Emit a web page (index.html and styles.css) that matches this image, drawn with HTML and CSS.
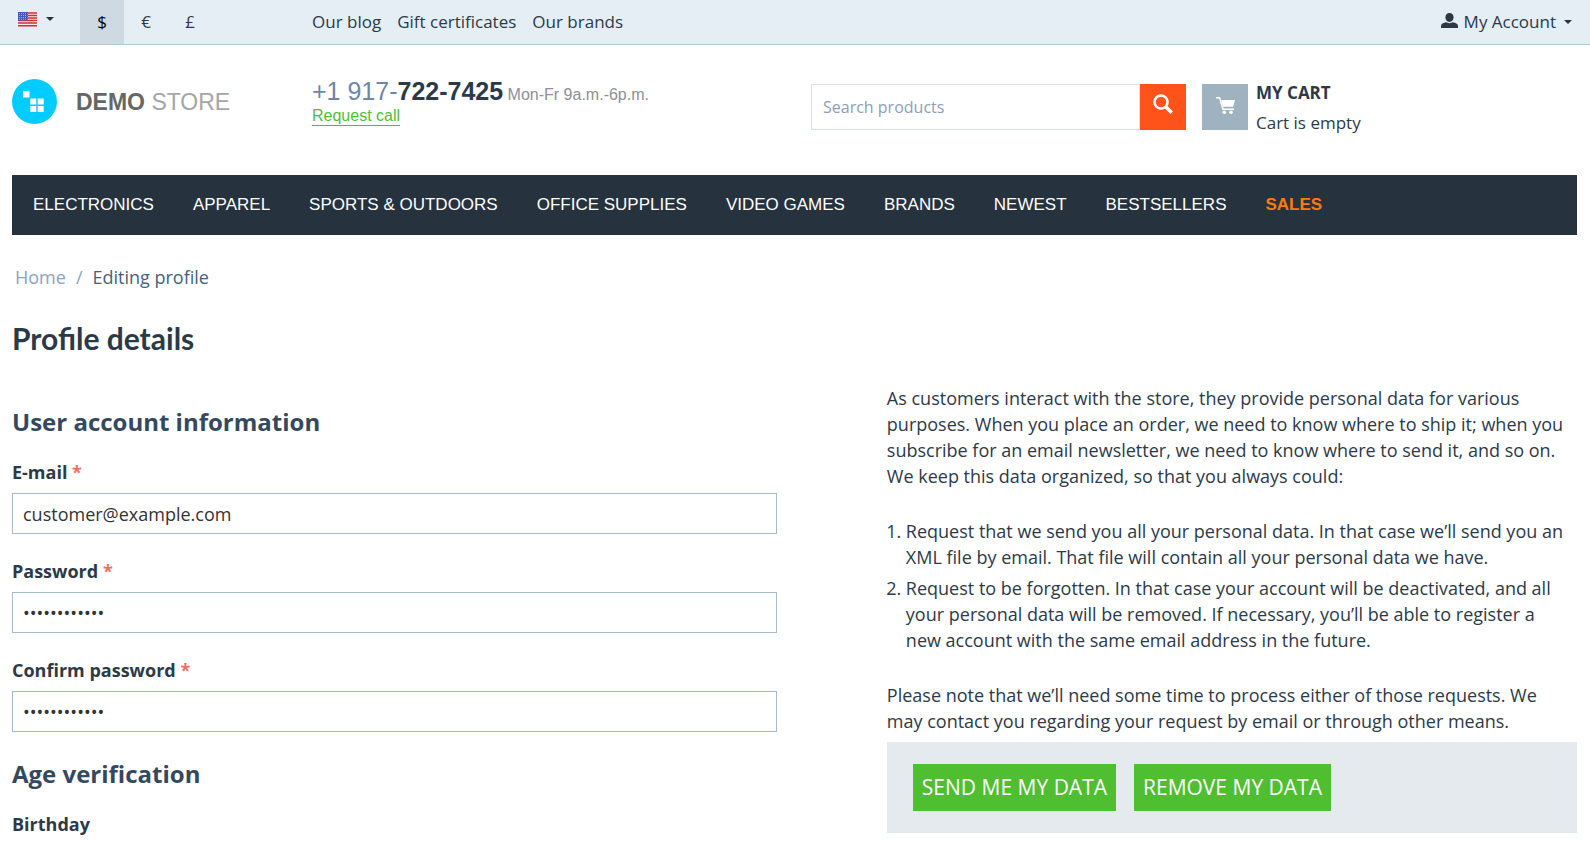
FILE: index.html
```html
<!DOCTYPE html>
<html lang="en">
<head>
<meta charset="utf-8">
<meta name="viewport" content="width=device-width, initial-scale=1">
<title>Profile details</title>
<link rel="stylesheet" href="styles.css">
</head>
<body>
<div class="topbar">
  <div class="topbar-left">
    <button class="language" type="button" aria-label="Language: English">
      <svg class="flag" viewBox="0 0 19 15" width="19" height="15" aria-hidden="true">
        <rect width="19" height="15" rx="1" fill="#f4eeee"/>
        <path d="M0 1h19M0 3.5h19M0 6h19M0 8.5h19M0 11h19M0 13.7h19" stroke="#cf2c38" stroke-width="1.4"/>
        <rect width="10" height="8.5" fill="#4659ae"/>
        <path d="M1 1.5h8.500M1 3.500h8.500M1 5.500h8.500M1 7.300h8.500" stroke="#b6c0e4" stroke-width=".8" stroke-dasharray="1 1"/>
      </svg>
      <span class="caret"></span>
    </button>
    <div class="currencies">
      <a class="currency currency-active" href="#usd">$</a>
      <a class="currency" href="#eur">€</a>
      <a class="currency" href="#gbp">£</a>
    </div>
  </div>
  <nav class="quick-links" aria-label="Quick links">
    <a href="#blog">Our blog</a>
    <a href="#gift">Gift certificates</a>
    <a href="#brands">Our brands</a>
  </nav>
  <button class="account" type="button">
    <svg viewBox="0 0 17 15" width="17" height="15" aria-hidden="true"><path fill="#2c3944" d="M8.500 0C11 0 12.600 1.900 12.600 4.300S11 9 8.500 9 4.400 6.700 4.400 4.300 6 0 8.500 0zM0 15v-2c0-2 2.500-3.200 5-3.700C7 10.400 10 10.400 12 9.300c2.500.5 5 1.700 5 3.700v2z"/></svg>
    <span>My Account</span>
    <span class="caret"></span>
  </button>
</div>
<header class="header">
  <a class="logo" href="#home">
    <svg viewBox="0 0 45 45" width="45" height="45" aria-hidden="true">
      <circle cx="22.500" cy="22.500" r="22.500" fill="#0cf"/>
      <path fill="#fff" d="M11 12h6.500v6.500H11zM18.300 19.500h6v6h-6zM25.700 19.500h6v6h-6zM18.300 27h6v6h-6zM25.700 27h6v6h-6z"/>
    </svg>
    <span class="logo-text"><b>DEMO</b> STORE</span>
  </a>
  <div class="phone">
    <div class="phone-line"><span class="phone-number">+1 917-<b>722-7425</b></span> <span class="hours">Mon-Fr 9a.m.-6p.m.</span></div>
    <a class="request-call" href="#call">Request call</a>
  </div>
  <form class="search" role="search">
    <input class="search-input" type="text" placeholder="Search products" aria-label="Search products">
    <button class="search-button" type="button" aria-label="Search">
      <svg viewBox="0 0 20 20" width="20" height="20" fill="none" stroke="#fff" aria-hidden="true"><circle cx="8" cy="8" r="6.500" stroke-width="2.600"/><path d="M13 13l5.800 5.800" stroke-width="3.600"/></svg>
    </button>
  </form>
  <a class="cart" href="#cart">
    <span class="cart-icon">
      <svg viewBox="0 0 19 17" width="19" height="17" aria-hidden="true"><path fill="none" stroke="#fff" stroke-width="1.500" d="M0 .8h3.600L7 12.200h11"/><path fill="#fff" d="M5 3h14l-2 6.800H7z"/><circle cx="8.300" cy="15.200" r="1.800" fill="#fff"/><circle cx="15" cy="15.200" r="1.800" fill="#fff"/></svg>
    </span>
    <span class="cart-text"><b>MY CART</b><span>Cart is empty</span></span>
  </a>
</header>
<nav class="menu" aria-label="Categories">
  <a href="#electronics">ELECTRONICS</a>
  <a href="#apparel">APPAREL</a>
  <a href="#sports">SPORTS &amp; OUTDOORS</a>
  <a href="#office">OFFICE SUPPLIES</a>
  <a href="#games">VIDEO GAMES</a>
  <a href="#brand-list">BRANDS</a>
  <a href="#newest">NEWEST</a>
  <a href="#bestsellers">BESTSELLERS</a>
  <a class="menu-sales" href="#sales">SALES</a>
</nav>
<main class="main">
  <nav class="breadcrumbs" aria-label="Breadcrumbs">
    <a href="#home">Home</a><span class="slash">/</span><span>Editing profile</span>
  </nav>
  <h1 class="title">Profile details</h1>
  <div class="columns">
    <form class="profile">
      <h2 class="subheader">User account information</h2>
      <div class="field">
        <label for="email">E-mail <span class="required">*</span></label>
        <input id="email" type="text" value="customer@example.com">
      </div>
      <div class="field">
        <label for="password">Password <span class="required">*</span></label>
        <input id="password" type="password" value="storedemo123">
      </div>
      <div class="field">
        <label for="confirm">Confirm password <span class="required">*</span></label>
        <input id="confirm" type="password" value="storedemo123">
      </div>
      <h2 class="subheader">Age verification</h2>
      <div class="field">
        <span class="field-name">Birthday</span>
      </div>
    </form>
    <aside class="privacy">
      <p>As customers interact with the store, they provide personal data for various purposes. When you place an order, we need to know where to ship it; when you subscribe for an email newsletter, we need to know where to send it, and so on. We keep this data organized, so that you always could:</p>
      <ol>
        <li>Request that we send you all your personal data. In that case we’ll send you an XML file by email. That file will contain all your personal data we have.</li>
        <li>Request to be forgotten. In that case your account will be deactivated, and all your personal data will be removed. If necessary, you’ll be able to register a new account with the same email address in the future.</li>
      </ol>
      <p>Please note that we’ll need some time to process either of those requests. We may contact you regarding your request by email or through other means.</p>
      <div class="actions">
        <button type="button">SEND ME MY DATA</button>
        <button type="button">REMOVE MY DATA</button>
      </div>
    </aside>
  </div>
</main>
</body>
</html>
```
FILE: styles.css
```css
* {
  box-sizing: border-box;
}

body {
  margin: 0;
  overflow: hidden;
  background: #fff;
  color: #2c3a48;
  font: 18px/26px "Open Sans", sans-serif;
}

a {
  color: inherit;
  text-decoration: none;
}

button,
input {
  margin: 0;
  border: 0;
  border-radius: 0;
  font: inherit;
  color: inherit;
}

button {
  padding: 0;
  background: none;
}

.topbar,
.header {
  display: grid;
  grid-template-columns: 300px 499px 1fr auto;
  padding: 0 12px;
}

.topbar {
  height: 45px;
  border-bottom: 1px solid #aecbdf;
  background: #e5eef4;
  font-size: 17px;
  line-height: 44px;
}

.topbar-left {
  display: flex;
}

.language {
  display: flex;
  align-items: center;
  gap: 9px;
  width: 68px;
  padding: 0 6px 6px;
}

.caret {
  border: 4px solid transparent;
  border-top-color: #26323e;
  border-bottom: 0;
}

.currencies {
  display: flex;
}

.currency {
  width: 44px;
  text-align: center;
}

.currency-active {
  background: #cfd9e2;
  color: #000;
}

.quick-links {
  display: flex;
  gap: 16px;
}

.account {
  display: flex;
  grid-column: 4;
  align-items: center;
  gap: 6px;
  padding-right: 6px;
}

.account svg {
  margin-bottom: 3px;
}

.account .caret {
  margin-left: 2px;
}

.header {
  grid-template-columns: 300px 499px 375px 1fr;
  align-items: start;
  padding-top: 34px;
}

.logo {
  display: flex;
  align-items: center;
  gap: 19px;
  height: 45px;
  color: #a5a5a5;
  font: 23px/30px "Liberation Sans", Arial, sans-serif;
}

.logo b {
  color: #666;
}

.phone {
  font-family: "Liberation Sans", Arial, sans-serif;
  font-size: 16px;
  line-height: 25px;
}

.phone-line {
  height: 24px;
}

.phone-number {
  color: #6c88a8;
  font-size: 25px;
}

.phone-number b {
  color: #2c3a48;
}

.hours {
  color: #8d9094;
}

.request-call {
  display: inline-block;
  border-bottom: 1px solid #4fbe31;
  color: #4fbe31;
  line-height: 18px;
}

.search {
  display: flex;
  margin-top: 5px;
  height: 46px;
}

.search-input {
  flex: 1;
  min-width: 0;
  padding: 0 11px;
  border: 1px solid #d9e0e8;
  font-size: 16px;
}

.search-input::placeholder {
  color: #8ba0b8;
  opacity: 1;
}

.search-button {
  width: 46px;
  background: #ff5319;
}

.cart {
  display: flex;
  gap: 8px;
  margin: 5px 0 0 16px;
  height: 46px;
  font-size: 17px;
  line-height: 30px;
}

.cart-icon {
  display: grid;
  place-items: center;
  width: 46px;
  height: 46px;
  padding-bottom: 3px;
  background: #9fb2c0;
}

.cart-text {
  display: grid;
  margin-top: -6px;
}

.menu {
  display: flex;
  gap: 39px;
  margin: 45px 13px 0 12px;
  padding: 0 21px;
  background: #26323e;
  color: #fff;
  font: 17px/60px "Liberation Sans", Arial, sans-serif;
}

.menu-sales {
  color: #ff7a0d;
  font-weight: bold;
}

.main {
  padding: 0 13px 0 12px;
}

.breadcrumbs {
  display: flex;
  margin: 29px 3px 0;
  color: #45627c;
}

.breadcrumbs a,
.slash {
  color: #8aa3bd;
}

.slash {
  margin: 0 10px;
}

.title {
  margin: 28px 0 0;
  font: bold 30px/40px Lato, sans-serif;
}

.columns {
  display: flex;
  justify-content: space-between;
  padding-top: 27px;
}

.profile {
  width: 48.9%;
  padding-top: 20px;
}

.subheader {
  margin: 0 0 21px;
  color: #34495e;
  font-size: 24px;
  line-height: 34px;
}

.field {
  margin-bottom: 25px;
}

.field label,
.field-name {
  display: block;
  margin-bottom: 9px;
  font-weight: bold;
  line-height: 24px;
}

.required {
  color: #ee6e61;
}

.field input {
  width: 100%;
  height: 41px;
  padding: 0 10px;
  border: 1px solid #a6bacd;
  color: #333;
}

.privacy {
  width: 44.1%;
}

.privacy p {
  margin: 0;
}

.privacy ol {
  margin: 29px 0;
  padding: 0 8px 0 19px;
}

.privacy li + li {
  margin-top: 5px;
}

.actions {
  display: flex;
  gap: 18px;
  margin-top: 8px;
  padding: 22px 26px;
  background: #e5eaef;
}

.actions button {
  padding: 0 9px;
  background: #4fbe31;
  color: #fff;
  font-size: 21px;
  line-height: 47px;
}
```
